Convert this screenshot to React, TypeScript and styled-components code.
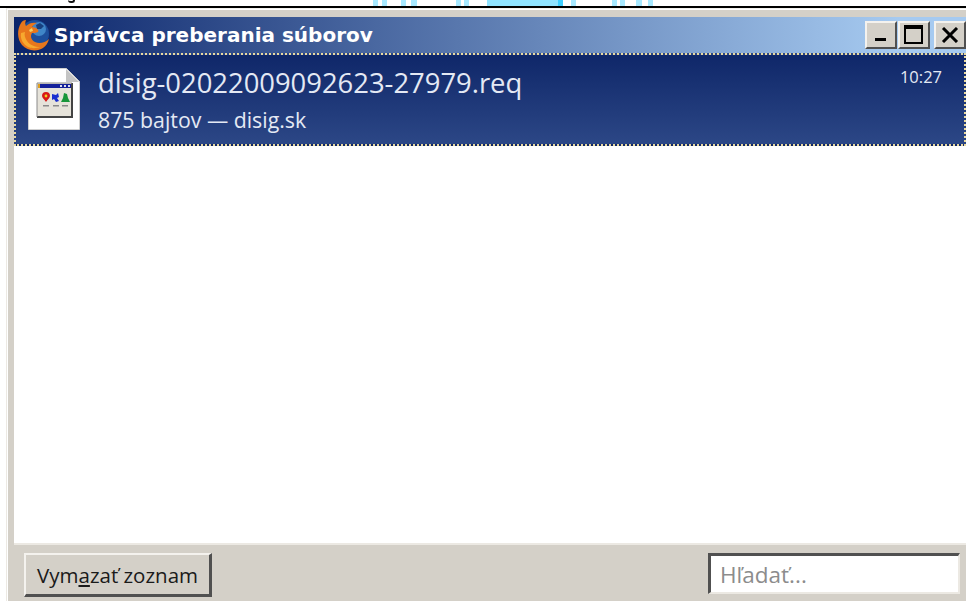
import React from 'react';
import styled, { createGlobalStyle } from 'styled-components';

const GlobalStyle = createGlobalStyle`
  html, body {
    margin: 0;
    padding: 0;
    background: #fff;
  }
  #root {
    width: 966px;
    height: 601px;
    overflow: hidden;
  }
`;

const Page = styled.div`
  display: flex;
  flex-direction: column;
  width: 966px;
  height: 601px;
  font-family: "Open Sans", "DejaVu Sans", sans-serif;
`;

const TopStrip = styled.div`
  display: flex;
  flex: none;
  height: 6px;
  background: #fff;
`;

const Tail = styled.span`
  flex: none;
  width: 7px;
  height: 3px;
  margin: 0 0 0 68px;
  border-bottom: 2px solid #111;
  border-right: 2px solid #111;
  border-radius: 0 0 4px 4px;
  box-sizing: border-box;
`;

const Bar = styled.span<{ $gap: number; $w: number; $strong?: boolean }>`
  flex: none;
  height: 6px;
  width: ${(p) => p.$w}px;
  margin-left: ${(p) => p.$gap}px;
  background: ${(p) =>
    p.$strong ? 'linear-gradient(90deg, #8fe3ff 94%, #3fcfff 94%)' : '#a6e8ff'};
`;

const Rule = styled.div`
  flex: none;
  height: 2px;
  background: #000;
`;

const Frame = styled.div`
  flex: 1;
  display: flex;
  flex-direction: column;
  min-height: 0;
  margin-left: 6px;
  padding: 8px 0 0 7px;
  background: #d4d0c8;
  border-left: 1px solid #ece9e3;
  border-top: 1px solid #f2f0ec;
  box-sizing: border-box;
  box-shadow: inset 1px 1px 0 #fff;
`;

const TitleBar = styled.div`
  flex: none;
  display: flex;
  align-items: center;
  height: 36px;
  background: linear-gradient(90deg, #0a246a 0%, #a6caf0 93%, #a6caf0 100%);
`;

const TitleIcon = styled.svg`
  flex: none;
  width: 34px;
  height: 34px;
  margin-left: 3px;
`;

const TitleText = styled.span`
  flex: 1;
  margin-left: 3px;
  font-family: "DejaVu Sans", sans-serif;
  font-weight: 700;
  font-size: 20px;
  color: #fff;
  white-space: nowrap;
`;

const CaptionButtons = styled.div`
  flex: none;
  display: flex;
`;

const CaptionButton = styled.div<{ $gap?: number }>`
  width: 32px;
  height: 28px;
  margin-left: ${(p) => p.$gap ?? 0}px;
  display: flex;
  align-items: center;
  justify-content: center;
  background: #d4d0c8;
  box-sizing: border-box;
  border-top: 2px solid #f4f2ee;
  border-left: 2px solid #f4f2ee;
  border-right: 2px solid #505050;
  border-bottom: 2px solid #505050;
`;

const List = styled.div`
  flex: 1;
  min-height: 0;
  display: flex;
  flex-direction: column;
  background: #fff;
`;

const Row = styled.div`
  flex: none;
  display: flex;
  height: 93px;
  box-sizing: border-box;
  padding: 13px 22px 0 12px;
  background: linear-gradient(180deg, #0f2769 0%, #2c4786 100%);
  border: 2px dotted #e8d9a0;
  color: #e4e9f4;
`;

const FileIcon = styled.svg`
  flex: none;
  width: 52px;
  height: 62px;
`;

const RowBody = styled.div`
  flex: 1;
  display: flex;
  flex-direction: column;
  margin-left: 18px;
  min-width: 0;
`;

const FileName = styled.div`
  font-size: 27.4px;
  line-height: 32px;
  margin-top: -1px;
  white-space: nowrap;
`;

const FileMeta = styled.div`
  font-size: 21.3px;
  line-height: 24px;
  margin-top: 9px;
  white-space: nowrap;
`;

const Time = styled.div`
  flex: none;
  font-size: 16.5px;
  line-height: 20px;
  margin-top: -1px;
`;

const Footer = styled.div`
  flex: none;
  display: flex;
  align-items: flex-start;
  justify-content: space-between;
  height: 58px;
  box-sizing: border-box;
  padding: 8px 6px 0 10px;
  background: #d4d0c8;
  border-top: 2px solid #ece9e3;
`;

const ClearButton = styled.button`
  width: 188px;
  height: 44px;
  padding: 0;
  background: #d4d0c8;
  font-family: "Open Sans", "DejaVu Sans", sans-serif;
  font-size: 20.5px;
  color: #1a1a1a;
  box-sizing: border-box;
  border-top: 2px solid #f4f2ee;
  border-left: 2px solid #f4f2ee;
  border-right: 3px solid #505050;
  border-bottom: 3px solid #505050;
`;

const AccessKey = styled.span`
  text-decoration: underline;
`;

const Search = styled.input`
  width: 252px;
  height: 41px;
  padding: 0 0 0 9px;
  background: #fff;
  font-family: "Open Sans", "DejaVu Sans", sans-serif;
  font-size: 22.5px;
  outline: none;
  box-sizing: border-box;
  border-top: 3px solid #505050;
  border-left: 3px solid #505050;
  border-right: 2px solid #ece9e3;
  border-bottom: 2px solid #ece9e3;

  &::placeholder {
    color: #8c8c8c;
    opacity: 1;
  }
`;

const bars = [
  { gap: 298, w: 5 },
  { gap: 4, w: 5 },
  { gap: 14, w: 5 },
  { gap: 5, w: 6 },
  { gap: 39, w: 5 },
  { gap: 3, w: 5 },
  { gap: 18, w: 76, strong: true },
  { gap: 8, w: 5 },
  { gap: 36, w: 5 },
  { gap: 3, w: 5 },
  { gap: 11, w: 6 },
  { gap: 6, w: 5 },
];

const FoxIcon = () => (
  <TitleIcon viewBox="0 0 34 34">
    <circle cx="18" cy="16" r="14" fill="#1d4f9c" />
    <circle cx="22" cy="11" r="7" fill="#3f86c8" />
    <path d="M19 7l4-2 4 3-3 3-4 0z" fill="#17407f" />
    <path
      d="M4 5C0 11 0 21 5 27c5 6 15 7 21 3 3-2 5-5 6-9-4 4-10 5-14 3-4-2-5-6-3-9 2 0 4 0 6-1 1-1 0-3-2-4-2-1-3-1-4-1 1-2 3-3 5-4-4-1-8 0-11 3C8 7 8 4 9 2 7 2 5 3 4 5z"
      fill="#e8771c"
    />
    <path d="M4 15c-1 6 2 11 7 14 5 2 9 1 12 0-5 0-10-2-13-6-2-3-3-6-2-9z" fill="#f7a92f" />
    <path d="M12 12l3-2 1 3-3 1z" fill="#f8d060" />
  </TitleIcon>
);

const DocumentIcon = () => (
  <FileIcon viewBox="0 0 52 62">
    <path d="M0.5 0.5h38l13 13v48h-51z" fill="#fff" stroke="#cfcfcf" />
    <path d="M38 1v13h13z" fill="#c4c4c4" />
    <rect x="9" y="15" width="35" height="34" fill="#e6e3da" />
    <path d="M9 49h35V15" fill="none" stroke="#444" strokeWidth="2" />
    <path d="M9 49V15h35" fill="none" stroke="#8a8a8a" strokeWidth="1" />
    <rect x="10" y="16" width="33" height="4" fill="#14209a" />
    <rect x="10" y="16" width="2" height="4" fill="#e0a020" />
    <rect x="32" y="17" width="2" height="2" fill="#dde" />
    <rect x="36" y="17" width="2" height="2" fill="#dde" />
    <rect x="40" y="17" width="2" height="2" fill="#dde" />
    <path d="M14 28a4 4 0 1 1 8 0c0 2-3 4-4 6-1-2-4-4-4-6z" fill="#d81818" />
    <circle cx="18" cy="28" r="1.4" fill="#f0d020" />
    <path d="M24 26l4 1 2-2 1 4-2 1 2 3-3 1-2-3-2 1z" fill="#1a30d0" />
    <path d="M33 34l2-4 1-5 3 1 1 4 2 4z" fill="#18963a" />
    <rect x="15" y="37" width="6" height="1.5" fill="#8a8a8a" />
    <rect x="25" y="37" width="6" height="1.5" fill="#8a8a8a" />
    <rect x="34" y="37" width="6" height="1.5" fill="#8a8a8a" />
  </FileIcon>
);

export default function App() {
  return (
    <Page>
      <GlobalStyle />
      <TopStrip>
        <Tail />
        {bars.map((b, i) => (
          <Bar key={i} $gap={b.gap} $w={b.w} $strong={b.strong} />
        ))}
      </TopStrip>
      <Rule />
      <Frame>
        <TitleBar>
          <FoxIcon />
          <TitleText>Správca preberania súborov</TitleText>
          <CaptionButtons>
            <CaptionButton>
              <svg width="14" height="14" viewBox="0 0 14 14">
                <rect x="1" y="10" width="11" height="3" fill="#000" />
              </svg>
            </CaptionButton>
            <CaptionButton $gap={1}>
              <svg width="20" height="20" viewBox="0 0 20 20">
                <path d="M1 1h17v17H1z" fill="none" stroke="#000" strokeWidth="2" />
                <rect x="1" y="1" width="17" height="3" fill="#000" />
              </svg>
            </CaptionButton>
            <CaptionButton $gap={4}>
              <svg width="18" height="16" viewBox="0 0 18 16">
                <path d="M2 1l14 14M16 1L2 15" stroke="#000" strokeWidth="3" />
              </svg>
            </CaptionButton>
          </CaptionButtons>
        </TitleBar>
        <List>
          <Row>
            <DocumentIcon />
            <RowBody>
              <FileName>disig-02022009092623-27979.req</FileName>
              <FileMeta>875 bajtov — disig.sk</FileMeta>
            </RowBody>
            <Time>10:27</Time>
          </Row>
        </List>
        <Footer>
          <ClearButton>
            Vym<AccessKey>a</AccessKey>zať zoznam
          </ClearButton>
          <Search placeholder="Hľadať..." />
        </Footer>
      </Frame>
    </Page>
  );
}
